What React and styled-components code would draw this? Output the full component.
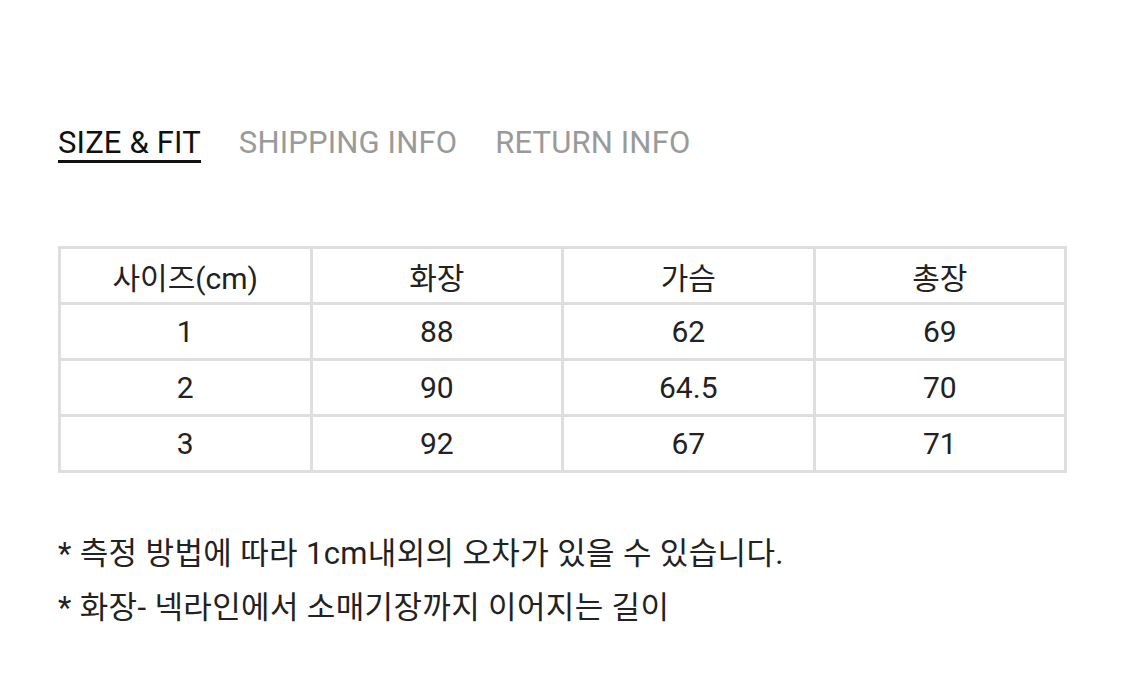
import React from "react";
import styled, { createGlobalStyle } from "styled-components";

const Global = createGlobalStyle`
  html, body { margin: 0; padding: 0; background: #fff; }
  body { font-family: Roboto, "Noto Sans CJK KR", sans-serif; color: #222; }
`;

const Page = styled.div`
  width: 1125px;
  height: 692px;
  box-sizing: border-box;
  padding: 126px 58px 0 58px;
`;

const Tabs = styled.div`
  display: flex;
  gap: 38px;
  height: 40px;
`;

const Tab = styled.div`
  font-size: 31px;
  letter-spacing: 0.15px;
  line-height: 34px;
  color: ${(p) => (p.$active ? "#111" : "#9a9a9a")};
  border-bottom: 3px solid ${(p) => (p.$active ? "#111" : "transparent")};
  height: 34px;
`;

const Table = styled.table`
  margin-top: 80px;
  width: 1009px;
  border-collapse: collapse;
  table-layout: fixed;
`;

const Cell = styled.td`
  border: 3px solid #dedede;
  height: 53px;
  padding: 0;
  text-align: center;
  font-size: 30px;
  color: #222;
`;

const Notes = styled.div`
  margin-top: 62px;
  display: flex;
  flex-direction: column;
  gap: 16px;
`;

const Note = styled.div`
  font-size: 31px;
  letter-spacing: 0.35px;
  line-height: 38px;
  color: #222;
`;

const rows = [
  ["사이즈(cm)", "화장", "가슴", "총장"],
  ["1", "88", "62", "69"],
  ["2", "90", "64.5", "70"],
  ["3", "92", "67", "71"],
];

export default function App() {
  return (
    <Page>
      <Global />
      <Tabs>
        <Tab $active>SIZE &amp; FIT</Tab>
        <Tab>SHIPPING INFO</Tab>
        <Tab>RETURN INFO</Tab>
      </Tabs>
      <Table>
        <tbody>
          {rows.map((r, i) => (
            <tr key={i}>
              {r.map((c, j) => (
                <Cell key={j}>{c}</Cell>
              ))}
            </tr>
          ))}
        </tbody>
      </Table>
      <Notes>
        <Note>* 측정 방법에 따라 1cm내외의 오차가 있을 수 있습니다.</Note>
        <Note>* 화장- 넥라인에서 소매기장까지 이어지는 길이</Note>
      </Notes>
    </Page>
  );
}
